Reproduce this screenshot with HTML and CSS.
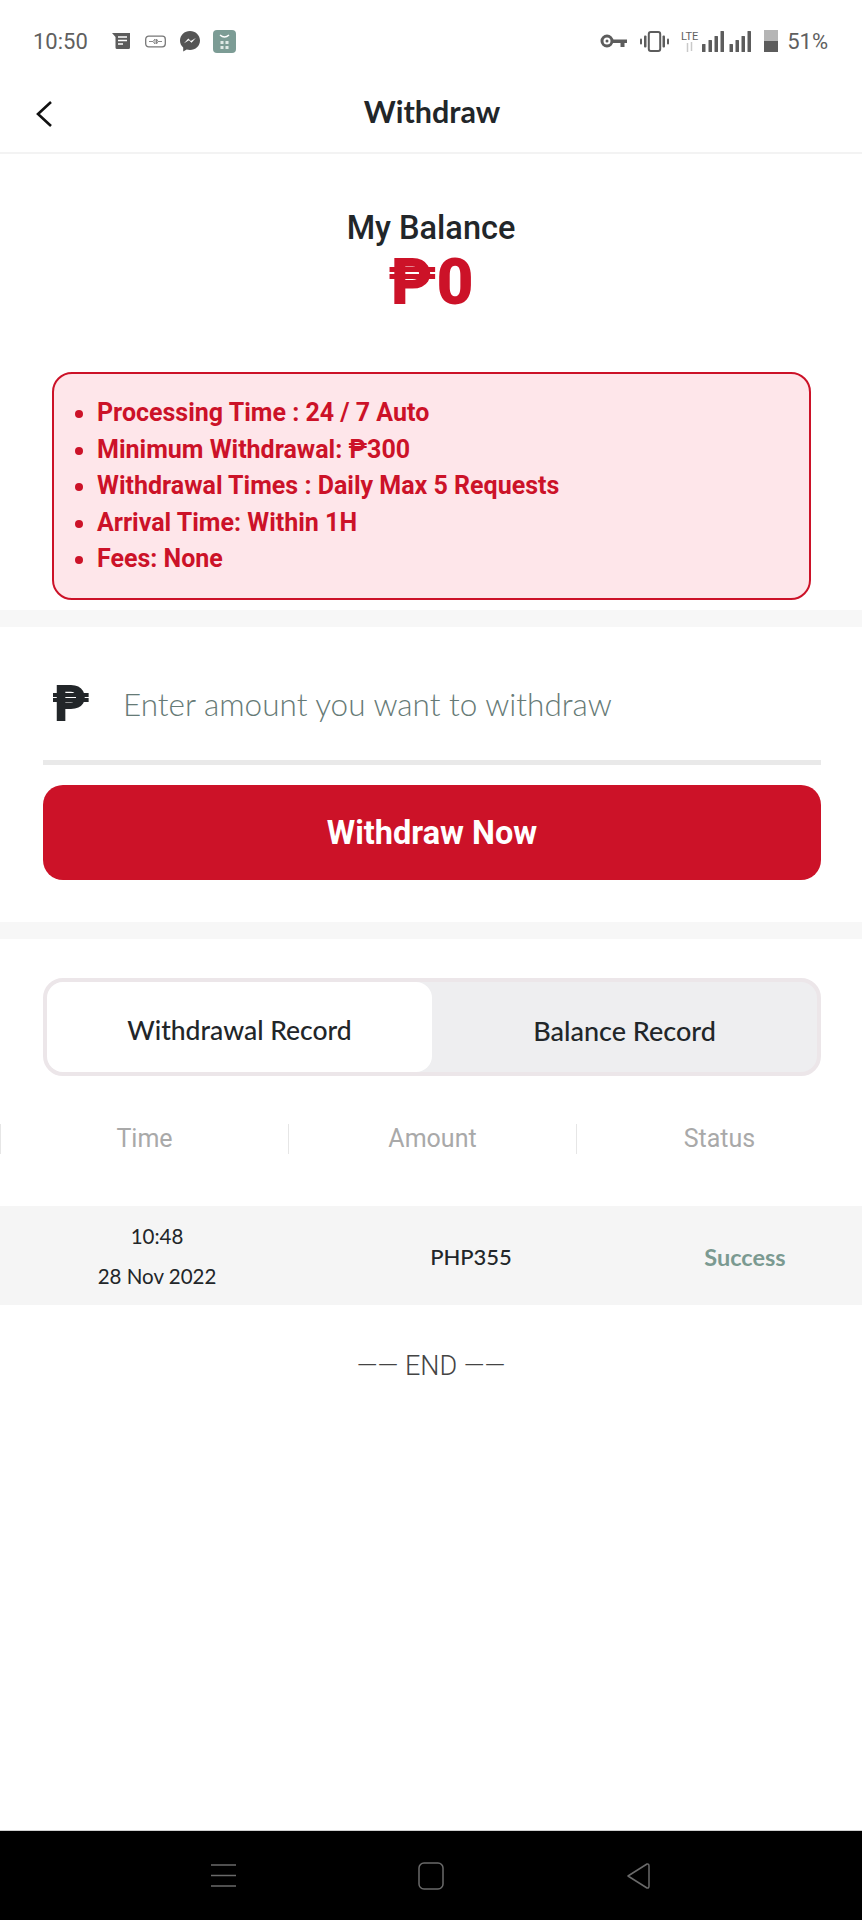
FILE: index.html
```html
<!DOCTYPE html>
<html lang="en">
<head>
    <meta charset="UTF-8">
    <meta name="viewport" content="width=device-width, initial-scale=1.0">
    <title>Withdraw</title>
    <link rel="stylesheet" href="styles.css">
</head>
<body>
    <div class="page">
        <div class="status-bar">
            <div class="status-left">
                <span class="clock">10:50</span>
                <svg class="ic-sms" width="18" height="17" viewBox="0 0 18 17">
                    <path d="M0 0H18V14.500Q18 16 16.500 16H5Q3.500 16 3.500 14.500V4Z" fill="#5c5c5c"/>
                    <path d="M6 4H15M6 7.500H15M6 11H11" stroke="#fff" stroke-width="1.500"/>
                </svg>
                <svg class="ic-plug" width="21" height="13" viewBox="0 0 21 13">
                    <rect x="0.700" y="1.200" width="19.600" height="10.600" rx="3" fill="none" stroke="#777" stroke-width="1.300"/>
                    <path d="M4 6.500H8L10 4V9L8 6.500M17 6.500H13L11.500 4V9L13 6.500" fill="none" stroke="#888" stroke-width="1"/>
                </svg>
                <svg class="ic-messenger" width="20" height="21" viewBox="0 0 20 21">
                    <path d="M10 0C4.500 0 0 4.200 0 9.600C0 12.500 1.200 14.900 3.200 16.600V20.500L6.700 18.600C7.700 18.900 8.800 19.100 10 19.100C15.500 19.100 20 15 20 9.600C20 4.200 15.500 0 10 0Z" fill="#555"/>
                    <path d="M4 12.200L8.300 7.500L10.800 10L15.800 7L11.500 11.800L9 9.300Z" fill="#fff"/>
                </svg>
                <svg class="ic-app" width="23" height="23" viewBox="0 0 23 23">
                    <rect width="23" height="23" rx="4" fill="#7c9c95"/>
                    <path d="M7 5Q11.500 9 16 5" fill="none" stroke="#fff" stroke-width="1.400"/>
                    <rect x="7.500" y="11" width="3" height="3" fill="#dfe9e6"/>
                    <rect x="12.500" y="11" width="3" height="3" fill="#dfe9e6"/>
                    <rect x="7.500" y="16" width="3" height="3" fill="#dfe9e6"/>
                    <rect x="12.500" y="16" width="3" height="3" fill="#dfe9e6"/>
                </svg>
            </div>
            <div class="status-right">
                <svg class="ic-key" width="27" height="15" viewBox="0 0 27 15">
                    <circle cx="7" cy="7" r="5" fill="none" stroke="#5c5c5c" stroke-width="3"/>
                    <path d="M12 5.500H27V9H24.500V13H20.500V9H12Z" fill="#5c5c5c"/>
                    <circle cx="7" cy="7" r="1.500" fill="#5c5c5c"/>
                </svg>
                <svg class="ic-vibrate" width="29" height="21" viewBox="0 0 29 21">
                    <rect x="8.800" y="1" width="11.400" height="19" rx="2" fill="none" stroke="#5c5c5c" stroke-width="2"/>
                    <rect x="4" y="4.500" width="2.500" height="12" rx="1" fill="#5c5c5c"/>
                    <rect x="22.500" y="4.500" width="2.500" height="12" rx="1" fill="#5c5c5c"/>
                    <rect x="0" y="7.500" width="2" height="6" rx="1" fill="#5c5c5c"/>
                    <rect x="27" y="7.500" width="2" height="6" rx="1" fill="#5c5c5c"/>
                </svg>
                <div class="lte">
                    <span class="lte-label">LTE</span>
                    <svg width="9" height="10" viewBox="0 0 9 10">
                        <path d="M2.500 10V1M6.500 0V9" stroke="#c9c9c9" stroke-width="1.500"/>
                    </svg>
                </div>
                <svg class="ic-signal" width="50" height="21" viewBox="0 0 50 21">
                    <g fill="#5c5c5c">
                        <rect x="0" y="13" width="3.500" height="8" rx="0.500"/>
                        <rect x="6.500" y="9" width="3.500" height="12" rx="0.500"/>
                        <rect x="12.500" y="5" width="3.500" height="16" rx="0.500"/>
                        <rect x="18.500" y="0" width="3.500" height="21" rx="0.500"/>
                        <rect x="27.500" y="13" width="3.500" height="8" rx="0.500"/>
                        <rect x="33.500" y="9" width="3.500" height="12" rx="0.500"/>
                        <rect x="39.500" y="5" width="3.500" height="16" rx="0.500"/>
                        <rect x="45.500" y="0" width="3.500" height="21" rx="0.500"/>
                    </g>
                </svg>
                <svg class="ic-battery" width="14" height="22" viewBox="0 0 14 22">
                    <rect x="0" y="0" width="14" height="11" fill="#b5b5b5"/>
                    <rect x="0" y="11" width="14" height="11" fill="#5c5c5c"/>
                </svg>
                <span class="battery-pct">51%</span>
            </div>
        </div>

        <div class="top-nav">
            <svg class="back-icon" width="18" height="28" viewBox="0 0 18 28">
                <path d="M16 2L3 14L16 26" fill="none" stroke="#111" stroke-width="2.600"/>
            </svg>
            <h1>Withdraw</h1>
        </div>

        <div class="balance">
            <div class="balance-label">My Balance</div>
            <div class="balance-value">₱0</div>
        </div>

        <div class="notice-wrap">
            <ul class="notice">
                <li>Processing Time : 24 / 7 Auto</li>
                <li>Minimum Withdrawal: ₱300</li>
                <li>Withdrawal Times : Daily Max 5 Requests</li>
                <li>Arrival Time: Within 1H</li>
                <li>Fees: None</li>
            </ul>
        </div>

        <div class="band"></div>

        <div class="withdraw-form">
            <div class="amount-row">
                <span class="peso">₱</span>
                <input type="text" class="amount-input" placeholder="Enter amount you want to withdraw">
            </div>
            <button class="withdraw-button">Withdraw Now</button>
        </div>

        <div class="band"></div>

        <div class="tabs">
            <div class="tab active">Withdrawal Record</div>
            <div class="tab">Balance Record</div>
        </div>

        <div class="table-head">
            <div class="head-cell">Time</div>
            <div class="head-cell">Amount</div>
            <div class="head-cell">Status</div>
        </div>

        <div class="record-row">
            <div class="record-time">
                <span>10:48</span>
                <span>28 Nov 2022</span>
            </div>
            <div class="record-amount">PHP355</div>
            <div class="record-status">Success</div>
        </div>

        <div class="end-mark">—— END ——</div>

        <div class="system-nav">
            <svg width="25" height="23" viewBox="0 0 25 23">
                <path d="M0 1H25M0 11.500H25M0 22H25" stroke="#6a6a6a" stroke-width="1.500"/>
            </svg>
            <svg width="26" height="28" viewBox="0 0 26 28">
                <rect x="1" y="1" width="24" height="26" rx="5" fill="none" stroke="#6a6a6a" stroke-width="1.500"/>
            </svg>
            <svg width="24" height="28" viewBox="0 0 24 28">
                <path d="M2 14L21 2Q23 1.500 23 4V24Q23 26.500 21 26Z" fill="none" stroke="#6a6a6a" stroke-width="1.500" stroke-linejoin="round"/>
            </svg>
        </div>
    </div>
</body>
</html>
```

FILE: styles.css
```css
* {
    box-sizing: border-box;
}
body {
    margin: 0;
    background-color: #ffffff;
    font-family: Roboto, "Liberation Sans", sans-serif;
    color: #222629;
}
.page {
    width: 862px;
    height: 1920px;
    display: flex;
    flex-direction: column;
    overflow: hidden;
}

/* status bar */
.status-bar {
    height: 70px;
    padding: 12px 34px 0 33px;
    display: flex;
    align-items: center;
    justify-content: space-between;
    color: #5f5f5f;
    font-size: 22px;
}
.status-left,
.status-right {
    display: flex;
    align-items: center;
}
.clock {
    width: 79px;
}
.ic-plug {
    margin-left: 15px;
}
.ic-messenger {
    margin-left: 14px;
}
.ic-app {
    margin-left: 13px;
}
.ic-vibrate {
    margin-left: 13px;
}
.lte {
    margin-left: 10px;
    width: 21px;
    display: flex;
    flex-direction: column;
    align-items: center;
    height: 21px;
}
.lte-label {
    font-size: 11px;
    line-height: 11px;
}
.ic-signal {
    margin-left: 2px;
}
.ic-battery {
    margin-left: 12px;
}
.battery-pct {
    margin-left: 9px;
}

/* header */
.top-nav {
    height: 84px;
    display: grid;
    grid-template-columns: 1fr auto 1fr;
    align-items: center;
    border-bottom: 2px solid #f3f3f3;
}
.back-icon {
    margin: 6px 0 0 35px;
}
.top-nav h1 {
    margin: 0 0 0 2px;
    font-family: Lato, sans-serif;
    font-size: 30.500px;
    font-weight: 700;
}

/* balance */
.balance {
    height: 218px;
    padding-top: 54px;
    text-align: center;
}
.balance-label {
    font-size: 32.500px;
    font-weight: 500;
    line-height: 40px;
}
.balance-value {
    font-size: 64px;
    font-weight: 900;
    line-height: 70px;
    color: #cc1228;
}

.notice-wrap {
    padding: 0 51px 0 52px;
}
.notice {
    margin: 0;
    height: 228px;
    padding: 21px 0 0 43px;
    border: 2px solid #cc1228;
    border-radius: 20px;
    background-color: #fee6ea;
    color: #cc1228;
    font-size: 25px;
    font-weight: 700;
    line-height: 36.600px;
}

.band {
    height: 17px;
    background-color: #f7f7f7;
    flex-shrink: 0;
}
.notice-wrap + .band {
    margin-top: 10px;
}

/* amount form */
.withdraw-form {
    height: 295px;
    padding: 33px 41px 0 43px;
}
.amount-row {
    height: 105px;
    padding-top: 19px;
    display: flex;
    align-items: flex-start;
    border-bottom: 5px solid #e9e9e9;
}
.peso {
    width: 80px;
    padding-left: 9px;
    font-size: 50px;
    font-weight: 900;
    line-height: 50px;
    color: #222629;
}
.amount-input {
    flex: 1;
    border: none;
    outline: none;
    padding: 0;
    height: 50px;
    font-family: Lato, sans-serif;
    font-weight: 300;
    font-size: 31.500px;
}
.amount-input::placeholder {
    color: #667a76;
    opacity: 1;
}
.withdraw-button {
    display: block;
    width: 100%;
    height: 95px;
    margin-top: 20px;
    border: none;
    border-radius: 20px;
    background-color: #cc1228;
    color: #ffffff;
    font-family: Roboto, sans-serif;
    font-size: 32.500px;
    font-weight: 700;
}

/* tabs */
.tabs {
    height: 98px;
    margin: 39px 41px 0 43px;
    border: 4px solid #ece6e9;
    border-radius: 20px;
    background-color: #eeeef0;
    display: flex;
    flex-shrink: 0;
}
.tab {
    flex: 1;
    padding-top: 6px;
    display: flex;
    align-items: center;
    justify-content: center;
    font-family: Lato, sans-serif;
    font-size: 27px;
    font-weight: 500;
}
.tab.active {
    background-color: #ffffff;
    border-radius: 16px;
    font-size: 26.500px;
}

/* records */
.table-head {
    height: 28px;
    margin-top: 48px;
    display: grid;
    grid-template-columns: 288px 288px 286px;
    flex-shrink: 0;
}
.head-cell {
    border-left: 1px solid #e6e6e6;
    text-align: center;
    font-size: 25px;
    line-height: 30px;
    color: #a9a9a9;
}
.record-row {
    height: 99px;
    margin-top: 54px;
    padding-top: 2px;
    background-color: #f5f5f5;
    display: grid;
    grid-template-columns: 314px 314px 234px;
    align-items: center;
    text-align: center;
    flex-shrink: 0;
    font-family: Lato, sans-serif;
    font-size: 22px;
}
.record-time {
    display: flex;
    flex-direction: column;
    gap: 13px;
    font-size: 20.500px;
    line-height: 27px;
}
.record-amount {
    font-weight: 500;
}
.record-status {
    font-size: 23.500px;
    font-weight: 700;
    color: #7b9a91;
}
.end-mark {
    margin-top: 45px;
    text-align: center;
    font-size: 27px;
    font-weight: 300;
    line-height: 32px;
    color: #444;
}

/* android nav */
.system-nav {
    margin-top: auto;
    height: 90px;
    padding-left: 211px;
    border-top: 1px solid #cfcfcf;
    background-color: #000000;
    flex-shrink: 0;
    display: flex;
    align-items: center;
    gap: 182px;
}
```
